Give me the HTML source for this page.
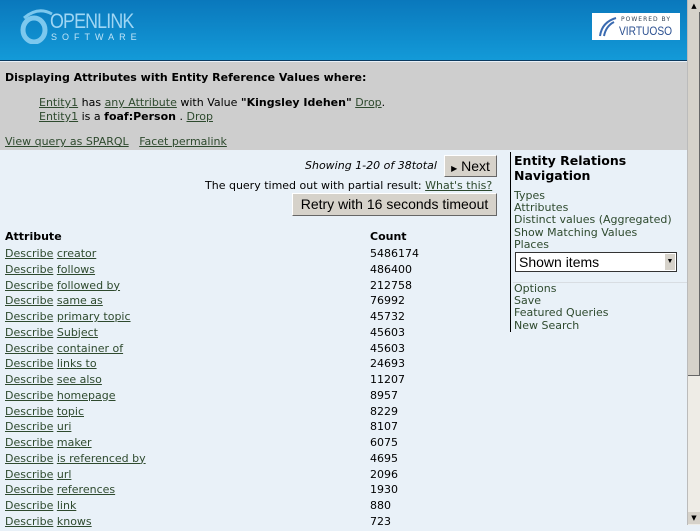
<!DOCTYPE html><html><head><style>
*{margin:0;padding:0;box-sizing:border-box}
body{width:700px;height:525px;overflow:hidden;background:#e9f1f8;font-family:"DejaVu Sans",sans-serif;font-size:11px;color:#000;position:relative}
a{color:#2e4a2e;text-decoration:underline}
.ab{position:absolute}
#hdr{left:0;top:0;width:687px;height:61px;background:linear-gradient(#0a78bc,#139ad8);border-bottom:1px solid #0a3a60}
#gray{left:0;top:62px;width:687px;height:88px;background:#cecece}
#sb{left:687px;top:0;width:13px;height:525px;background:#eeece6;border-left:1px solid #bbb}
.row{position:absolute;left:5px;height:16px;white-space:nowrap}
.cnt{position:absolute;left:370px}
.nav a{text-decoration:none;display:block;line-height:12.2px;color:#2e4a2e}
.btn{position:absolute;background:#d6d2ca;border:1px solid #fff;border-right-color:#666;border-bottom-color:#666;font-family:"Liberation Sans",sans-serif;font-size:14px;text-align:center}
</style></head><body>
<div id="hdr" class="ab">
 <svg class="ab" style="left:16px;top:8px" width="40" height="36"><ellipse cx="18" cy="22" rx="11" ry="12" fill="none" stroke="#7cc8ee" stroke-width="5"/><path d="M8 10 Q22 -2 36 6" stroke="#7cc8ee" stroke-width="3" fill="none"/></svg>
 <div class="ab" style="left:50px;top:10px;color:#9fd6f4;font-family:'Liberation Sans',sans-serif;font-size:21px;letter-spacing:-1px;transform:scaleX(.85);transform-origin:left">OPENLINK</div>
 <div class="ab" style="left:51px;top:32px;color:#bfe4f8;font-family:'Liberation Sans',sans-serif;font-size:9px;letter-spacing:5px">SOFTWARE</div>
 <div class="ab" style="left:592px;top:13px;width:88px;height:27px;background:#fff;overflow:hidden">
  <svg class="ab" style="left:4px;top:3px" width="22" height="22"><path d="M4 20 Q6 6 20 2 M8 20 Q10 10 18 6" stroke="#3a6ab0" stroke-width="2" fill="none"/></svg>
  <div class="ab" style="left:29px;top:3px;font-size:6px;color:#345;letter-spacing:1px">POWERED BY</div>
  <div class="ab" style="left:27px;top:11px;font-size:12px;color:#2a4f90;font-family:'Liberation Sans',sans-serif;transform:scaleX(.85);transform-origin:left">VIRTUOSO</div>
 </div>
</div>
<div id="gray" class="ab">
 <div class="ab" style="left:5px;top:9px;font-weight:bold">Displaying Attributes with Entity Reference Values where:</div>
 <div class="ab" style="left:39px;top:34px;line-height:14px"><a>Entity1</a> has <a>any Attribute</a> with Value <b>"Kingsley Idehen"</b> <a>Drop</a>.<br><a>Entity1</a> is a <b>foaf:Person</b> . <a>Drop</a></div>
 <div class="ab" style="left:5px;top:73px"><a>View query as SPARQL</a>&nbsp;&nbsp; <a>Facet permalink</a></div>
</div>
<div class="ab" style="left:305px;top:159px;font-style:italic">Showing 1-20 of 38total</div>
<div class="btn" style="left:444px;top:155px;width:53px;height:22px;line-height:20px"><span style="font-size:8px">▶</span> Next</div>
<div class="ab" style="left:205px;top:179px">The query timed out with partial result: <a>What's this?</a></div>
<div class="btn" style="left:292px;top:193px;width:205px;height:23px;line-height:21px">Retry with 16 seconds timeout</div>
<div class="ab" style="left:510px;top:152px;width:1px;height:180px;background:#000"></div>
<div class="ab" style="left:514px;top:153px;font-weight:bold;font-size:12.5px;line-height:15px">Entity Relations<br>Navigation</div>
<div class="ab nav" style="left:514px;top:190px"><a>Types</a><a>Attributes</a><a>Distinct values (Aggregated)</a><a>Show Matching Values</a><a>Places</a></div>
<div class="ab" style="left:515px;top:252px;width:162px;height:20px;background:#fff;border:1px solid #333;font-family:'Liberation Sans',sans-serif;font-size:14px;padding-left:3px;line-height:18px">Shown items<div class="ab" style="right:1px;top:1px;width:10px;height:16px;background:#d6d2ca;font-size:7px;line-height:16px;text-align:center">▼</div></div>
<div class="ab" style="left:513px;top:282px;width:174px;height:1px;background:#d8dde2"></div>
<div class="ab nav" style="left:514px;top:283px"><a>Options</a><a>Save</a><a>Featured Queries</a><a>New Search</a></div>
<div class="row" style="top:230px;font-weight:bold">Attribute</div>
<div class="ab" style="left:370px;top:230px;font-weight:bold">Count</div>
<div id="rows"></div>
<div id="sb" class="ab"><div class="ab" style="left:0;top:0;width:12px;height:12px;background:#d6d2ca;font-size:7px;text-align:center;line-height:12px">▲</div><div class="ab" style="left:0;top:12px;width:12px;height:364px;background:#d6d2ca;border-right:1px solid #666;border-bottom:1px solid #666"></div><div class="ab" style="left:0;top:512px;width:12px;height:12px;background:#d6d2ca;font-size:7px;text-align:center;line-height:12px">▼</div></div>
<script>
var d=[["creator",5486174],["follows",486400],["followed by",212758],["same as",76992],["primary topic",45732],["Subject",45603],["container of",45603],["links to",24693],["see also",11207],["homepage",8957],["topic",8229],["uri",8107],["maker",6075],["is referenced by",4695],["url",2096],["references",1930],["link",880],["knows",723]];
var h="";d.forEach(function(r,i){var t=247+i*15.75;h+='<div class="row" style="top:'+t+'px"><a>Describe</a>&nbsp;<a>'+r[0]+'</a></div><div class="cnt ab" style="top:'+t+'px">'+r[1]+'</div>'});
document.getElementById("rows").innerHTML=h;
</script>
</body></html>
